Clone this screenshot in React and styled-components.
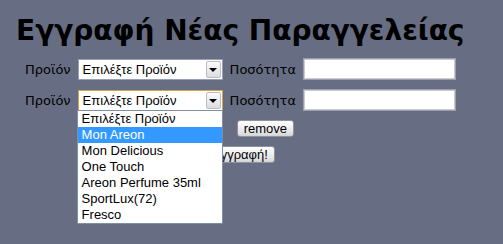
import styled, { createGlobalStyle } from "styled-components";

const GlobalStyle = createGlobalStyle`
  html, body {
    margin: 0;
    padding: 0;
    background: #676e84;
  }
`;

const products = [
  "Επιλέξτε Προϊόν",
  "Mon Areon",
  "Mon Delicious",
  "One Touch",
  "Areon Perfume 35ml",
  "SportLux(72)",
  "Fresco",
];

const Page = styled.div`
  width: 503px;
  height: 244px;
  background: #676e84;
  padding: 0 0 0 25px;
  box-sizing: border-box;
  overflow: hidden;
`;

const Title = styled.h1`
  margin: 0 0 0 -9px;
  padding-top: 14px;
  height: 58px;
  box-sizing: border-box;
  font-family: "DejaVu Sans", Verdana, sans-serif;
  font-size: 28px;
  font-weight: bold;
  color: #000;
  white-space: nowrap;
`;

const Row = styled.div`
  display: flex;
  align-items: center;
  gap: 7px;
  height: 22px;
  margin-bottom: 9px;
`;

const Label = styled.span`
  font-family: "DejaVu Sans", Verdana, sans-serif;
  font-size: 13px;
  color: #000;
`;

const SelectWrap = styled.div`
  position: relative;
  width: 145px;
  height: 21px;
  box-sizing: border-box;
  border: 1px solid ${(p) => (p.focused ? "#d9a440" : "#9aa0b4")};
  background: #fff;
  display: flex;
  align-items: center;
`;

const SelectText = styled.span`
  flex: 1;
  padding-left: 4px;
  font-family: "Liberation Sans", Arial, sans-serif;
  font-size: 13px;
  color: #000;
`;

const Arrow = styled.span`
  width: 15px;
  height: 17px;
  margin-right: 1px;
  box-sizing: border-box;
  border: 1px solid #b9bcc4;
  border-radius: 2px;
  background: linear-gradient(#fbfbfb, #dcdde1);
  display: flex;
  align-items: center;
  justify-content: center;
  &::after {
    content: "";
    border-left: 4px solid transparent;
    border-right: 4px solid transparent;
    border-top: 4px solid #000;
    margin-top: 1px;
  }
`;

const TextInput = styled.div`
  width: 153px;
  height: 22px;
  box-sizing: border-box;
  border: 1px solid #9c9fab;
  box-shadow: inset 0 0 0 1px #c9cad2;
  background: #fff;
`;

const List = styled.ul`
  position: absolute;
  top: 19px;
  left: -2px;
  width: 146px;
  margin: 0;
  padding: 0;
  list-style: none;
  box-sizing: border-box;
  border: 1px solid #7f8fa6;
  background: #fff;
  z-index: 5;
`;

const Item = styled.li`
  height: 16px;
  line-height: 16px;
  padding-left: 4px;
  font-family: "Liberation Sans", Arial, sans-serif;
  font-size: 13px;
  color: ${(p) => (p.active ? "#fff" : "#000")};
  background: ${(p) => (p.active ? "#3399ff" : "#fff")};
`;

const ButtonRow = styled.div`
  display: flex;
  gap: 14px;
  padding-left: ${(p) => p.indent}px;
  margin-top: ${(p) => p.top}px;
`;

const Button = styled.button`
  height: 17px;
  padding: 0 6px;
  box-sizing: border-box;
  border: 1px solid #8e929b;
  border-radius: 3px;
  background: linear-gradient(#ffffff, #e6e6e6 70%, #d4d4d8);
  font-family: "Liberation Sans", Arial, sans-serif;
  font-size: 13px;
  line-height: 13px;
  color: #000;
`;

function Select({ focused, open }) {
  return (
    <SelectWrap focused={focused}>
      <SelectText>Επιλέξτε Προϊόν</SelectText>
      <Arrow />
      {open && (
        <List>
          {products.map((p, i) => (
            <Item key={p} active={i === 1}>
              {p}
            </Item>
          ))}
        </List>
      )}
    </SelectWrap>
  );
}

function ProductRow({ focused, open }) {
  return (
    <Row>
      <Label>Προϊόν</Label>
      <Select focused={focused} open={open} />
      <Label>Ποσότητα</Label>
      <TextInput />
    </Row>
  );
}

export default function App() {
  return (
    <Page>
      <GlobalStyle />
      <Title>Εγγραφή Νέας Παραγγελείας</Title>
      <ProductRow />
      <ProductRow focused open />
      <ButtonRow indent={162} top={1}>
        <Button>add</Button>
        <Button>remove</Button>
      </ButtonRow>
      <ButtonRow indent={180} top={9}>
        <Button>Εγγραφή!</Button>
      </ButtonRow>
    </Page>
  );
}
